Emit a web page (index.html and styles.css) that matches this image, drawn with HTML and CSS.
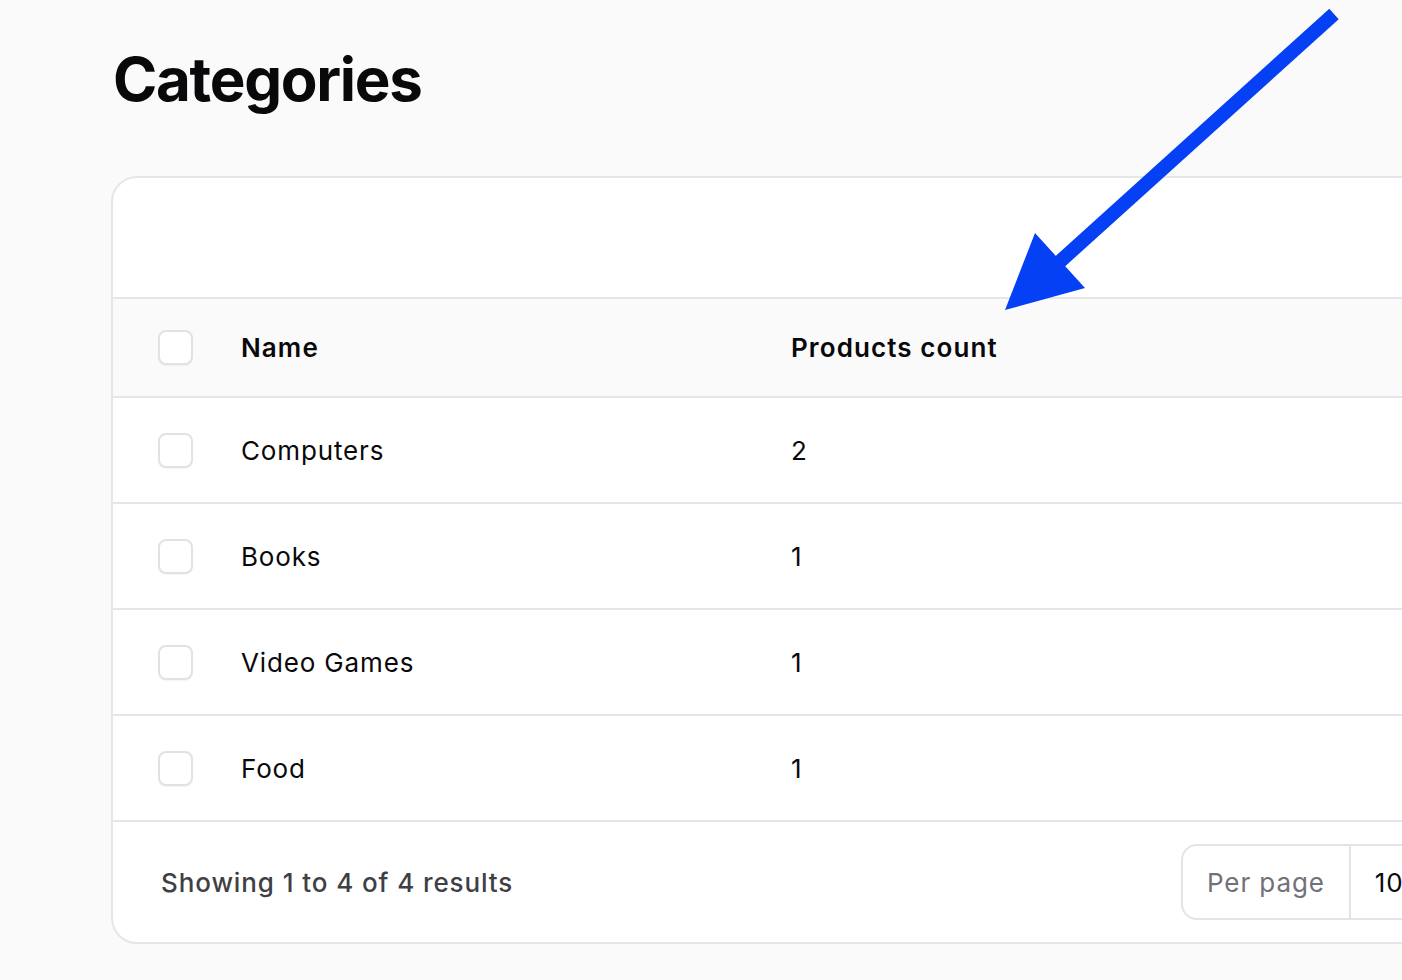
FILE: index.html
```html
<!DOCTYPE html>
<html lang="en">
<head>
<meta charset="utf-8">
<title>Categories</title>
<link rel="stylesheet" href="styles.css">
</head>
<body>
<main class="page">
  <h1 class="title">Categories</h1>
  <section class="card">
    <div class="toolbar"></div>
    <div class="row head">
      <div class="cell check"><span class="box"></span></div>
      <div class="cell name">Name</div>
      <div class="cell count">Products count</div>
    </div>
    <div class="row">
      <div class="cell check"><span class="box"></span></div>
      <div class="cell name">Computers</div>
      <div class="cell count">2</div>
    </div>
    <div class="row">
      <div class="cell check"><span class="box"></span></div>
      <div class="cell name">Books</div>
      <div class="cell count">1</div>
    </div>
    <div class="row">
      <div class="cell check"><span class="box"></span></div>
      <div class="cell name">Video Games</div>
      <div class="cell count">1</div>
    </div>
    <div class="row">
      <div class="cell check"><span class="box"></span></div>
      <div class="cell name">Food</div>
      <div class="cell count">1</div>
    </div>
    <div class="footer">
      <span class="summary">Showing 1 to 4 of 4 results</span>
      <div class="perpage">
        <span class="pp-label">Per page</span>
        <span class="pp-value">10</span>
      </div>
    </div>
  </section>
</main>
<svg class="arrow" width="1402" height="980" viewBox="0 0 1402 980" aria-hidden="true">
  <line x1="1334" y1="14" x2="1055" y2="266" stroke="#0540f4" stroke-width="14"/>
  <polygon points="1005,310 1035,233 1085,288" fill="#0540f4"/>
</svg>
</body>
</html>
```

FILE: styles.css
```css
html, body {
  margin: 0;
  padding: 0;
  background: #fafafa;
  overflow: hidden;
  width: 1402px;
  height: 980px;
}

body {
  font-family: "Inter", "Liberation Sans", sans-serif;
  color: #09090b;
  position: relative;
}

.page {
  padding: 39px 0 0 111px;
}

.title {
  margin: 0 0 0 2px;
  font-size: 60px;
  line-height: 80px;
  font-weight: 700;
  letter-spacing: -1.3px;
  height: 80px;
}

.card {
  margin-top: 57px;
  width: 1400px;
  background: #fff;
  border: 2px solid #e6e6e8;
  border-radius: 26px;
  overflow: hidden;
}

.toolbar {
  height: 119px;
  border-bottom: 2px solid #e6e6e8;
}

.row {
  display: flex;
  align-items: center;
  height: 104px;
  border-bottom: 2px solid #e6e6e8;
  font-size: 26px;
  letter-spacing: 0.85px;
}

.row.head {
  height: 97px;
  background: #fafafa;
  font-weight: 600;
  letter-spacing: 1.1px;
}

.cell.check {
  width: 128px;
  padding-left: 45px;
  box-sizing: border-box;
  display: flex;
  align-items: center;
}

.box {
  width: 31px;
  height: 31px;
  border: 2px solid #e2e2e4;
  border-radius: 8px;
  background: #fff;
  box-shadow: 0 1px 1px rgba(0,0,0,0.04);
}

.cell.name {
  width: 550px;
}

.footer {
  height: 120px;
  display: flex;
  align-items: center;
  padding-left: 48px;
}

.summary {
  font-size: 26px;
  color: #3f3f46;
  font-weight: 500;
  letter-spacing: 0.9px;
  width: 1020px;
}

.perpage {
  display: flex;
  align-items: stretch;
  height: 72px;
  border: 2px solid #e4e4e7;
  border-radius: 16px;
  font-size: 26px;
  letter-spacing: 0.9px;
  overflow: hidden;
}

.pp-label {
  display: flex;
  align-items: center;
  padding: 0 24px 0 24px;
  color: #71717a;
  border-right: 2px solid #e4e4e7;
}

.pp-value {
  display: flex;
  align-items: center;
  padding: 0 60px 0 24px;
  color: #09090b;
}

.arrow {
  position: absolute;
  left: 0;
  top: 0;
  pointer-events: none;
}
```
